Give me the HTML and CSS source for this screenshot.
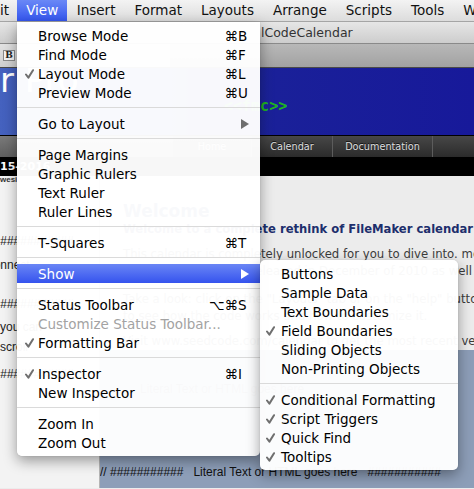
FILE: index.html
```html
<!DOCTYPE html>
<html>
<head>
<meta charset="utf-8">
<link rel="stylesheet" href="styles.css">
</head>
<body>
<div class="menubar">
  <span class="mb-item first">Edit</span>
  <span class="mb-item active">View</span>
  <span class="mb-item">Insert</span>
  <span class="mb-item">Format</span>
  <span class="mb-item">Layouts</span>
  <span class="mb-item">Arrange</span>
  <span class="mb-item">Scripts</span>
  <span class="mb-item">Tools</span>
  <span class="mb-item">Window</span>
</div>

<div class="window">
  <div class="titlebar"><span class="title">lCodeCalendar</span></div>
  <div class="toolbar">
    <div class="fmtbar"><span class="fmt-btn">B</span></div>
    <div class="toolgrey"></div>
  </div>
  <div class="header">
    <div class="brand">Calendar Pro</div>
    <div class="merge">&lt;&lt;fmc&gt;&gt;</div>
  </div>
  <div class="tabs">
    <div class="tab-spacer"></div>
    <div class="tab active">Home</div>
    <div class="tab">Calendar</div>
    <div class="tab wide">Documentation</div>
  </div>
  <div class="blackbar"><span class="date">15-2016</span></div>
  <div class="content">
    <div class="side">
      <div class="tiny">wesi</div>
      <div class="code c1">// ###########</div>
      <div class="code c2">Connect</div>
      <div class="code c3">// ###########</div>
      <div class="code c4">you can</div>
      <div class="code c5">scroll</div>
      <div class="code c6">// ###########</div>
    </div>
    <div class="main">
      <div class="main-body">
        <div class="welcome">Welcome</div>
        <div class="lead">Welcome to a complete rethink of FileMaker calendar</div>
        <p class="para">This calendar is completely unlocked for you to dive into. more<br>and was first publicly released in December of 2010 as well as</p>
        <p class="para p2">Take a look: click on the "Layouts" tab or on the "help" button<br>to see how the code works and how to customize it.</p>
        <p class="para p3">Visit www.seedcode.com/calendar to get the most recent version</p>
      </div>
      <div class="footer">
        <div class="ghost">Literal Text or HTML goes here</div>
        <div class="literal">// ###########   Literal Text or HTML goes here   ###########</div>
      </div>
    </div>
  </div>
</div>

<div class="menu main-menu">
  <div class="row"><span class="chk"></span><span class="label">Browse Mode</span><span class="mods">⌘</span><span class="key">B</span></div>
  <div class="row"><span class="chk"></span><span class="label">Find Mode</span><span class="mods">⌘</span><span class="key">F</span></div>
  <div class="row"><span class="chk"><svg width="9" height="10" viewBox="0 0 9 10"><path d="M1 5.5 L3.4 8.6 L8 1.2" fill="none" stroke="#6f6f6f" stroke-width="2" stroke-linecap="round" stroke-linejoin="round"/></svg></span><span class="label">Layout Mode</span><span class="mods">⌘</span><span class="key">L</span></div>
  <div class="row"><span class="chk"></span><span class="label">Preview Mode</span><span class="mods">⌘</span><span class="key">U</span></div>
  <div class="sep"></div>
  <div class="row"><span class="chk"></span><span class="label">Go to Layout</span><span class="key"><span class="arrow"></span></span></div>
  <div class="sep"></div>
  <div class="row"><span class="chk"></span><span class="label">Page Margins</span></div>
  <div class="row"><span class="chk"></span><span class="label">Graphic Rulers</span></div>
  <div class="row"><span class="chk"></span><span class="label">Text Ruler</span></div>
  <div class="row"><span class="chk"></span><span class="label">Ruler Lines</span></div>
  <div class="sep"></div>
  <div class="row"><span class="chk"></span><span class="label">T-Squares</span><span class="mods">⌘</span><span class="key">T</span></div>
  <div class="sep"></div>
  <div class="row hl"><span class="chk"></span><span class="label">Show</span><span class="key"><span class="arrow"></span></span></div>
  <div class="sep"></div>
  <div class="row"><span class="chk"></span><span class="label">Status Toolbar</span><span class="mods">⌥⌘</span><span class="key">S</span></div>
  <div class="row disabled"><span class="chk"></span><span class="label">Customize Status Toolbar...</span></div>
  <div class="row"><span class="chk"><svg width="9" height="10" viewBox="0 0 9 10"><path d="M1 5.5 L3.4 8.6 L8 1.2" fill="none" stroke="#6f6f6f" stroke-width="2" stroke-linecap="round" stroke-linejoin="round"/></svg></span><span class="label">Formatting Bar</span></div>
  <div class="sep"></div>
  <div class="row"><span class="chk"><svg width="9" height="10" viewBox="0 0 9 10"><path d="M1 5.5 L3.4 8.6 L8 1.2" fill="none" stroke="#6f6f6f" stroke-width="2" stroke-linecap="round" stroke-linejoin="round"/></svg></span><span class="label">Inspector</span><span class="mods">⌘</span><span class="key">I</span></div>
  <div class="row"><span class="chk"></span><span class="label">New Inspector</span></div>
  <div class="sep"></div>
  <div class="row"><span class="chk"></span><span class="label">Zoom In</span></div>
  <div class="row"><span class="chk"></span><span class="label">Zoom Out</span></div>
</div>

<div class="menu sub-menu">
  <div class="row"><span class="chk"></span><span class="label">Buttons</span></div>
  <div class="row"><span class="chk"></span><span class="label">Sample Data</span></div>
  <div class="row"><span class="chk"></span><span class="label">Text Boundaries</span></div>
  <div class="row"><span class="chk"><svg width="9" height="10" viewBox="0 0 9 10"><path d="M1 5.5 L3.4 8.6 L8 1.2" fill="none" stroke="#6f6f6f" stroke-width="2" stroke-linecap="round" stroke-linejoin="round"/></svg></span><span class="label">Field Boundaries</span></div>
  <div class="row"><span class="chk"></span><span class="label">Sliding Objects</span></div>
  <div class="row"><span class="chk"></span><span class="label">Non-Printing Objects</span></div>
  <div class="sep"></div>
  <div class="row"><span class="chk"><svg width="9" height="10" viewBox="0 0 9 10"><path d="M1 5.5 L3.4 8.6 L8 1.2" fill="none" stroke="#6f6f6f" stroke-width="2" stroke-linecap="round" stroke-linejoin="round"/></svg></span><span class="label">Conditional Formatting</span></div>
  <div class="row"><span class="chk"><svg width="9" height="10" viewBox="0 0 9 10"><path d="M1 5.5 L3.4 8.6 L8 1.2" fill="none" stroke="#6f6f6f" stroke-width="2" stroke-linecap="round" stroke-linejoin="round"/></svg></span><span class="label">Script Triggers</span></div>
  <div class="row"><span class="chk"><svg width="9" height="10" viewBox="0 0 9 10"><path d="M1 5.5 L3.4 8.6 L8 1.2" fill="none" stroke="#6f6f6f" stroke-width="2" stroke-linecap="round" stroke-linejoin="round"/></svg></span><span class="label">Quick Find</span></div>
  <div class="row"><span class="chk"><svg width="9" height="10" viewBox="0 0 9 10"><path d="M1 5.5 L3.4 8.6 L8 1.2" fill="none" stroke="#6f6f6f" stroke-width="2" stroke-linecap="round" stroke-linejoin="round"/></svg></span><span class="label">Tooltips</span></div>
</div>
</body>
</html>
```

FILE: styles.css
```css
* { box-sizing: border-box; }
html, body { margin: 0; padding: 0; }
body {
  width: 474px;
  height: 489px;
  overflow: hidden;
  position: relative;
  background: #ececec;
  font-family: "DejaVu Sans", sans-serif;
}

/* ---------- menu bar ---------- */
.menubar {
  height: 22px;
  display: flex;
  white-space: nowrap;
  background: linear-gradient(#f3f3f3, #dcdcdc);
  border-bottom: 1px solid #a5a5a5;
  overflow: hidden;
}
.mb-item {
  flex: none;
  padding: 0 9.5px;
  height: 21px;
  line-height: 21px;
  font-size: 13.5px;
  color: #111;
}
.mb-item.first { margin-left: -17px; padding: 0 8px 0 0; }
.mb-item.active {
  padding: 0 9px;
  color: #fff;
  background: linear-gradient(#6a88f6, #3456ef);
}

/* ---------- window behind ---------- */
.titlebar {
  height: 22px;
  background: linear-gradient(#e6e6e6, #cdcdcd);
  border-bottom: 1px solid #8a8a8a;
  font-size: 12.5px;
  line-height: 21px;
  color: #333;
  padding-left: 261px;
}
.toolbar {
  height: 24px;
  display: flex;
  border-bottom: 1px solid #4a4a4a;
}
.fmtbar {
  width: 170px;
  background: linear-gradient(#e2e2e2, #cfcfcf);
  padding: 6px 0 0 3px;
}
.fmt-btn {
  display: block;
  width: 12px;
  height: 11px;
  border: 1px solid #8a8a8a;
  background: #f4f4f4;
  font-family: "DejaVu Serif", serif;
  font-weight: bold;
  font-size: 9px;
  line-height: 9px;
  text-align: center;
  color: #222;
}
.toolgrey {
  flex: 1;
  background: linear-gradient(#b8b8b8, #a2a2a2);
}
.header {
  height: 68px;
  background: linear-gradient(90deg, #4562bf 0%, #2f45b0 30%, #1a2099 58%, #17199a 100%);
  border-bottom: 1px solid #000;
  overflow: hidden;
}
.brand {
  margin-left: -139px;
  margin-top: -5px;
  font-size: 34px;
  line-height: 34px;
  color: #fff;
  white-space: nowrap;
}
.merge {
  padding-left: 224px;
  margin-top: 1px;
  font-family: "DejaVu Sans Mono", monospace;
  font-weight: bold;
  font-size: 15px;
  line-height: 16px;
  color: #1fb51f;
}
.tabs {
  height: 21px;
  display: flex;
  background: linear-gradient(#474747, #2b2b2b);
}
.tab-spacer { width: 173px; background: linear-gradient(#7a7a7a, #5e5e5e); }
.tab {
  width: 81px;
  border-right: 1px solid #5c5c5c;
  text-align: center;
  font-size: 9.7px;
  line-height: 21px;
  color: #dedede;
  text-shadow: 0 -1px 0 #111;
}
.tab.active { width: 79px; background: linear-gradient(#5a5a5a, #444); }
.tab.wide { width: 100px; }
.blackbar {
  height: 19px;
  background: #000;
  color: #fff;
  font-weight: bold;
  font-size: 11px;
  line-height: 19px;
  white-space: nowrap;
}
.content {
  display: flex;
  height: 312px;
}
.side {
  width: 100px;
  flex: none;
  background: #f3f3f3;
  border-right: 1px solid #b5b5b5;
  font-family: "Liberation Sans", sans-serif;
  font-size: 12px;
  color: #222;
  white-space: nowrap;
  overflow: hidden;
}
.tiny { font-size: 8px; line-height: 8px; font-weight: bold; color: #333; }
.code { line-height: 14px; font-style: italic; }
.c1 { margin-top: 50px; margin-left: -10px; }
.c2 { margin-top: 10px; margin-left: -15px; font-style: normal; }
.c3 { margin-top: 25px; margin-left: -10px; }
.c4 { margin-top: 9px; font-style: normal; }
.c5 { margin-top: 6px; font-style: normal; }
.c6 { margin-top: 13px; margin-left: -10px; }
.main {
  flex: 1;
  display: flex;
  flex-direction: column;
  overflow: hidden;
}
.main-body {
  height: 227px;
  padding-left: 23px;
  white-space: nowrap;
}
.welcome {
  margin-top: 26px;
  font-size: 17px;
  line-height: 18px;
  font-weight: bold;
  color: #2b3f85;
}
.lead {
  margin-top: 2px;
  font-size: 11.6px;
  line-height: 14px;
  font-weight: bold;
  color: #1d2f6c;
}
.para {
  margin: 10px 0 0;
  font-size: 11.7px;
  line-height: 17px;
  color: #3c3c3c;
}
.p2 { margin-top: 11px; }
.p3 { margin-top: 8px; }
.footer {
  flex: 1;
  background: #8d9eb8;
  font-family: "Liberation Sans", sans-serif;
  font-size: 12px;
  color: #111;
  white-space: pre;
}
.ghost { margin-top: 4px; padding-left: 40px; line-height: 14px; color: #2c3550; }
.literal { margin-top: 41px; line-height: 14px; }

/* ---------- menus ---------- */
.menu {
  position: absolute;
  padding: 4px 0;
  background: rgba(255, 255, 255, 0.97);
  box-shadow: 0 5px 14px rgba(0, 0, 0, 0.38), 0 0 1px rgba(0, 0, 0, 0.25);
  font-size: 13.5px;
  color: #000;
  white-space: nowrap;
}
.main-menu {
  top: 22px;
  left: 17px;
  width: 243px;
  border-radius: 0 0 5px 5px;
}
.sub-menu {
  top: 260px;
  left: 260px;
  width: 198px;
  border-radius: 5px;
}
.row {
  height: 19px;
  display: flex;
  align-items: center;
  padding-left: 8px;
}
.sub-menu .row { padding-left: 6px; }
.chk {
  width: 13px;
  flex: none;
  display: flex;
  align-items: center;
}
.sub-menu .chk { width: 15px; }
.label { flex: 1; }
.mods { text-align: right; }
.key { width: 22px; flex: none; display: flex; align-items: center; }
.arrow {
  width: 0;
  height: 0;
  margin-left: 3px;
  border-left: 8px solid #6e6e6e;
  border-top: 5px solid transparent;
  border-bottom: 5px solid transparent;
}
.row.hl {
  color: #fff;
  background: linear-gradient(#6a86f5, #3553ee);
}
.row.hl .arrow { border-left-color: #fff; }
.row.disabled { color: #a3a3a3; }
.sep {
  height: 1px;
  margin: 5px 0 6px;
  background: #dadada;
}
```
